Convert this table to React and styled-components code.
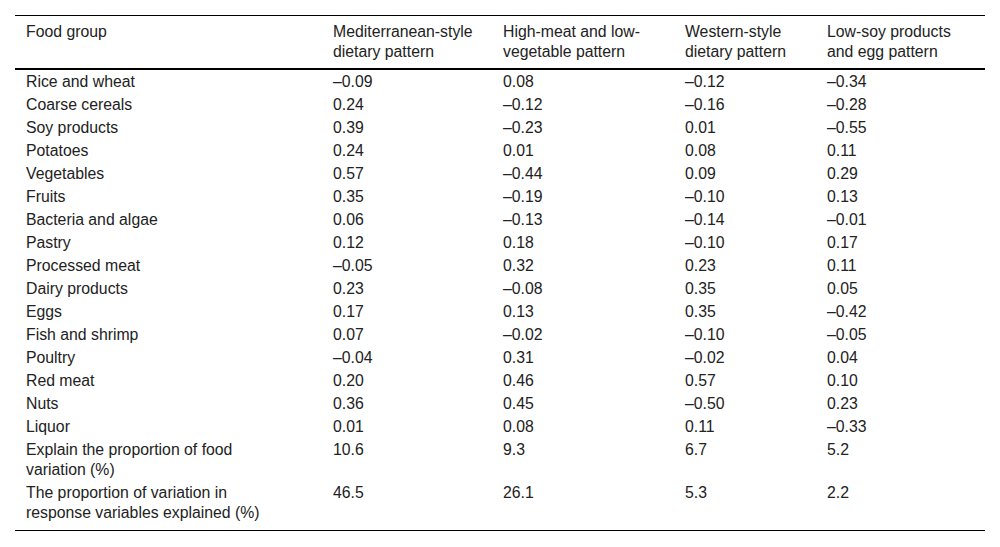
import styled, { createGlobalStyle } from "styled-components";

const GlobalStyle = createGlobalStyle`
  html, body {
    margin: 0;
    padding: 0;
    background: #fff;
  }
  body {
    font-family: "Liberation Sans", Arial, sans-serif;
    color: #222;
  }
`;

const Page = styled.div`
  padding: 15px 15px 16px 15px;
`;

const Table = styled.table`
  width: 970px;
  table-layout: fixed;
  border-collapse: collapse;
  border-spacing: 0;
  border-top: 1px solid #000;
  border-bottom: 1px solid #000;
  font-size: 15.8px;
  line-height: 20px;
  text-align: left;
`;

const HeadCell = styled.th`
  font-weight: 400;
  vertical-align: top;
  padding: 6px 11px 6px 11px;
  border-bottom: 2px solid #000;
`;

const Cell = styled.td`
  vertical-align: top;
  padding: ${(p) => (p.$last ? "1.5px 11px 7px 11px" : "1.5px 11px 1.5px 11px")};
`;

const Label = styled.span`
  display: block;
  max-width: 240px;
`;

const columns = [
  { title: "Food group", width: 307 },
  { title: "Mediterranean-style dietary pattern", width: 170 },
  { title: "High-meat and low-vegetable pattern", width: 182 },
  { title: "Western-style dietary pattern", width: 142 },
  { title: "Low-soy products and egg pattern", width: 169 },
];

const rows = [
  ["Rice and wheat", "–0.09", "0.08", "–0.12", "–0.34"],
  ["Coarse cereals", "0.24", "–0.12", "–0.16", "–0.28"],
  ["Soy products", "0.39", "–0.23", "0.01", "–0.55"],
  ["Potatoes", "0.24", "0.01", "0.08", "0.11"],
  ["Vegetables", "0.57", "–0.44", "0.09", "0.29"],
  ["Fruits", "0.35", "–0.19", "–0.10", "0.13"],
  ["Bacteria and algae", "0.06", "–0.13", "–0.14", "–0.01"],
  ["Pastry", "0.12", "0.18", "–0.10", "0.17"],
  ["Processed meat", "–0.05", "0.32", "0.23", "0.11"],
  ["Dairy products", "0.23", "–0.08", "0.35", "0.05"],
  ["Eggs", "0.17", "0.13", "0.35", "–0.42"],
  ["Fish and shrimp", "0.07", "–0.02", "–0.10", "–0.05"],
  ["Poultry", "–0.04", "0.31", "–0.02", "0.04"],
  ["Red meat", "0.20", "0.46", "0.57", "0.10"],
  ["Nuts", "0.36", "0.45", "–0.50", "0.23"],
  ["Liquor", "0.01", "0.08", "0.11", "–0.33"],
  ["Explain the proportion of food variation (%)", "10.6", "9.3", "6.7", "5.2"],
  ["The proportion of variation in response variables explained (%)", "46.5", "26.1", "5.3", "2.2"],
];

export default function App() {
  return (
    <>
      <GlobalStyle />
      <Page>
        <Table>
          <colgroup>
            {columns.map((c) => (
              <col key={c.title} style={{ width: c.width }} />
            ))}
          </colgroup>
          <thead>
            <tr>
              {columns.map((c) => (
                <HeadCell key={c.title}>{c.title}</HeadCell>
              ))}
            </tr>
          </thead>
          <tbody>
            {rows.map((r, i) => (
              <tr key={r[0]}>
                {r.map((v, j) => (
                  <Cell key={j} $last={i === rows.length - 1}>
                    {j === 0 ? <Label>{v}</Label> : v}
                  </Cell>
                ))}
              </tr>
            ))}
          </tbody>
        </Table>
      </Page>
    </>
  );
}
